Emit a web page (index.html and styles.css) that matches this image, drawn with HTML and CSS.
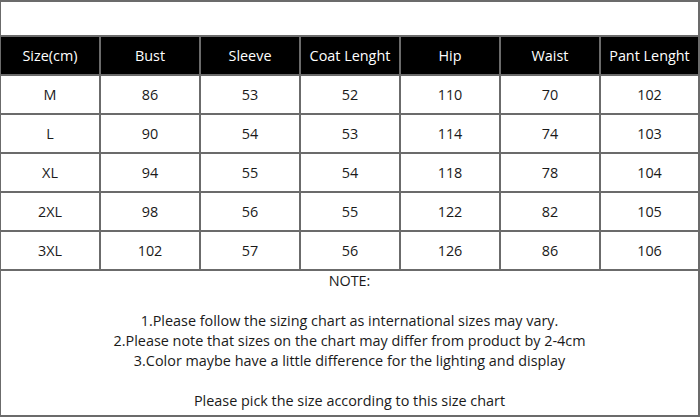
FILE: index.html
```html
<!DOCTYPE html>
<html>
<head>
<meta charset="utf-8">
<link rel="stylesheet" href="styles.css">
</head>
<body>
<div class="chart">
  <div class="title"></div>
  <div class="cell head">Size(cm)</div>
  <div class="cell head">Bust</div>
  <div class="cell head">Sleeve</div>
  <div class="cell head">Coat Lenght</div>
  <div class="cell head">Hip</div>
  <div class="cell head">Waist</div>
  <div class="cell head">Pant Lenght</div>

  <div class="cell">M</div><div class="cell">86</div><div class="cell">53</div><div class="cell">52</div><div class="cell">110</div><div class="cell">70</div><div class="cell">102</div>
  <div class="cell">L</div><div class="cell">90</div><div class="cell">54</div><div class="cell">53</div><div class="cell">114</div><div class="cell">74</div><div class="cell">103</div>
  <div class="cell">XL</div><div class="cell">94</div><div class="cell">55</div><div class="cell">54</div><div class="cell">118</div><div class="cell">78</div><div class="cell">104</div>
  <div class="cell">2XL</div><div class="cell">98</div><div class="cell">56</div><div class="cell">55</div><div class="cell">122</div><div class="cell">82</div><div class="cell">105</div>
  <div class="cell">3XL</div><div class="cell">102</div><div class="cell">57</div><div class="cell">56</div><div class="cell">126</div><div class="cell">86</div><div class="cell">106</div>

  <div class="note">
    <p>NOTE:</p>
    <p>&nbsp;</p>
    <p>1.Please follow the sizing chart as international sizes may vary.</p>
    <p>2.Please note that sizes on the chart may differ from product by 2-4cm</p>
    <p>3.Color maybe have a little difference for the lighting and display</p>
    <p>&nbsp;</p>
    <p>Please pick the size according to this size chart</p>
  </div>
</div>
</body>
</html>
```

FILE: styles.css
```css
html, body {
  margin: 0;
  padding: 0;
  background: #ffffff;
}

.chart {
  width: 700px;
  height: 417px;
  box-sizing: border-box;
  background: #6b6b6b;
  padding: 2px 2px 2px 1px;
  display: grid;
  grid-template-columns: repeat(6, 98px) 97px;
  grid-template-rows: 33px 37px 37px 37px 37px 37px 37px 144px;
  gap: 2px;
  font-family: "Open Sans", "Noto Sans", sans-serif;
  font-size: 14.4px;
  color: #1a1a1a;
}

.title {
  grid-column: 1 / -1;
  background: #fff;
}

.cell {
  background: #fff;
  display: flex;
  align-items: center;
  justify-content: center;
  white-space: nowrap;
  padding-bottom: 1px;
}

.cell.head {
  background: #000;
  color: #fff;
}

.note {
  grid-column: 1 / -1;
  background: #fff;
  text-align: center;
}

.note p {
  margin: 0;
  line-height: 20px;
}
```
